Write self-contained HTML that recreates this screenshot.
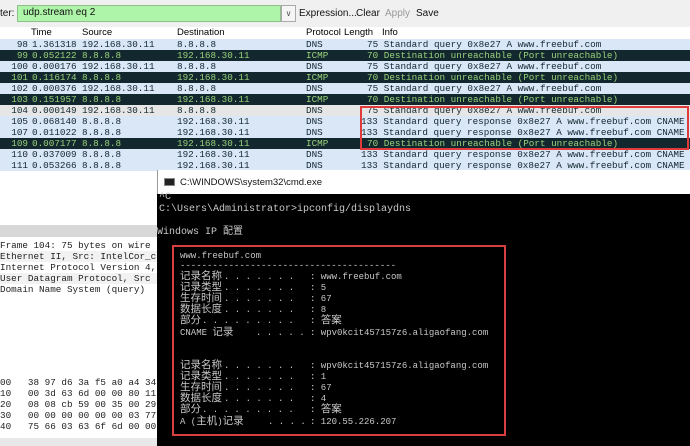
<!DOCTYPE html>
<html><head><meta charset="utf-8"><style>
*{margin:0;padding:0;box-sizing:border-box}
body{width:690px;height:446px;overflow:hidden;background:#fff;position:relative;font-family:"Liberation Sans",sans-serif}
.abs{position:absolute;white-space:pre}
.mono{font-family:"Liberation Mono","DejaVu Sans Mono",monospace;font-size:9.3px}
.row{position:absolute;left:0;width:690px;height:11px;font-family:"Liberation Mono",monospace;font-size:9.3px;line-height:11px;color:#12272e}
.row span{position:absolute;white-space:pre}
.row .n{right:662px;text-align:right}
.d{background:#dae7f7}
.i{background:#12272e;color:#9ad27a}
.s{background:#e6e6e6}
.cmd{font-family:"Liberation Mono","Noto Sans CJK SC",monospace;font-size:10px;color:#c8c8c8;position:absolute;white-space:pre;line-height:12px}
.ln{position:absolute;left:180px;height:11px;font-family:"Liberation Mono","Noto Sans CJK SC",monospace;font-size:9px;color:#c8c8c8;white-space:pre;line-height:11px}
.ln b{font-weight:normal;position:absolute;white-space:pre}
.ln i{font-style:normal;font-size:10.5px}
</style></head><body>
<div class="abs" style="left:0;top:0;width:690px;height:27px;background:#f0f0f0"></div>
<div class="abs" style="left:0;top:8px;font-size:10px;color:#111">ter:</div>
<div class="abs" style="left:17px;top:5px;width:264px;height:17px;background:#aff5a9;border:1px solid #8fbf8a"></div>
<div class="abs" style="left:23px;top:7px;font-size:10px;color:#111">udp.stream eq 2</div>
<div class="abs" style="left:281px;top:5px;width:15px;height:17px;background:#f5f5f5;border:1px solid #aaa;font-size:8px;text-align:center;line-height:15px;color:#555">∨</div>
<div class="abs" style="left:299px;top:8px;font-size:10px;color:#111">Expression...</div>
<div class="abs" style="left:356px;top:8px;font-size:10px;color:#111">Clear</div>
<div class="abs" style="left:385px;top:8px;font-size:10px;color:#999">Apply</div>
<div class="abs" style="left:416px;top:8px;font-size:10px;color:#111">Save</div>
<div class="abs" style="left:31px;top:27px;font-size:9.5px">Time</div>
<div class="abs" style="left:82px;top:27px;font-size:9.5px">Source</div>
<div class="abs" style="left:177px;top:27px;font-size:9.5px">Destination</div>
<div class="abs" style="left:306px;top:27px;font-size:9.5px">Protocol</div>
<div class="abs" style="left:344px;top:27px;font-size:9.5px">Length</div>
<div class="abs" style="left:382px;top:27px;font-size:9.5px">Info</div>

<div class="row d" style="top:39px"><span class="n">98</span><span style="left:32px">1.361318</span><span style="left:82px">192.168.30.11</span><span style="left:177px">8.8.8.8</span><span style="left:306px">DNS</span><span style="left:367px">75 Standard query 0x8e27 A www.freebuf.com</span></div>
<div class="row i" style="top:50px"><span class="n">99</span><span style="left:32px">0.052122</span><span style="left:82px">8.8.8.8</span><span style="left:177px">192.168.30.11</span><span style="left:306px">ICMP</span><span style="left:367px">70 Destination unreachable (Port unreachable)</span></div>
<div class="row d" style="top:61px"><span class="n">100</span><span style="left:32px">0.000176</span><span style="left:82px">192.168.30.11</span><span style="left:177px">8.8.8.8</span><span style="left:306px">DNS</span><span style="left:367px">75 Standard query 0x8e27 A www.freebuf.com</span></div>
<div class="row i" style="top:72px"><span class="n">101</span><span style="left:32px">0.116174</span><span style="left:82px">8.8.8.8</span><span style="left:177px">192.168.30.11</span><span style="left:306px">ICMP</span><span style="left:367px">70 Destination unreachable (Port unreachable)</span></div>
<div class="row d" style="top:83px"><span class="n">102</span><span style="left:32px">0.000376</span><span style="left:82px">192.168.30.11</span><span style="left:177px">8.8.8.8</span><span style="left:306px">DNS</span><span style="left:367px">75 Standard query 0x8e27 A www.freebuf.com</span></div>
<div class="row i" style="top:94px"><span class="n">103</span><span style="left:32px">0.151957</span><span style="left:82px">8.8.8.8</span><span style="left:177px">192.168.30.11</span><span style="left:306px">ICMP</span><span style="left:367px">70 Destination unreachable (Port unreachable)</span></div>
<div class="row s" style="top:105px"><span class="n">104</span><span style="left:32px">0.000149</span><span style="left:82px">192.168.30.11</span><span style="left:177px">8.8.8.8</span><span style="left:306px">DNS</span><span style="left:367px">75 Standard query 0x8e27 A www.freebuf.com</span></div>
<div class="row d" style="top:116px"><span class="n">105</span><span style="left:32px">0.068140</span><span style="left:82px">8.8.8.8</span><span style="left:177px">192.168.30.11</span><span style="left:306px">DNS</span><span style="left:361px">133 Standard query response 0x8e27 A www.freebuf.com CNAME w</span></div>
<div class="row d" style="top:127px"><span class="n">107</span><span style="left:32px">0.011022</span><span style="left:82px">8.8.8.8</span><span style="left:177px">192.168.30.11</span><span style="left:306px">DNS</span><span style="left:361px">133 Standard query response 0x8e27 A www.freebuf.com CNAME w</span></div>
<div class="row i" style="top:138px"><span class="n">109</span><span style="left:32px">0.007177</span><span style="left:82px">8.8.8.8</span><span style="left:177px">192.168.30.11</span><span style="left:306px">ICMP</span><span style="left:367px">70 Destination unreachable (Port unreachable)</span></div>
<div class="row d" style="top:149px"><span class="n">110</span><span style="left:32px">0.037009</span><span style="left:82px">8.8.8.8</span><span style="left:177px">192.168.30.11</span><span style="left:306px">DNS</span><span style="left:361px">133 Standard query response 0x8e27 A www.freebuf.com CNAME w</span></div>
<div class="row d" style="top:160px"><span class="n">111</span><span style="left:32px">0.053266</span><span style="left:82px">8.8.8.8</span><span style="left:177px">192.168.30.11</span><span style="left:306px">DNS</span><span style="left:361px">133 Standard query response 0x8e27 A www.freebuf.com CNAME w</span></div>
<div class="abs" style="left:360px;top:106px;width:329px;height:44px;border:2px solid #e03a3a"></div>

<div class="abs" style="left:0;top:225px;width:157px;height:12px;background:#d8d8d8"></div>
<div class="abs" style="left:0;top:251px;width:157px;height:11px;background:rgba(0,0,0,0.05)"></div>
<div class="abs" style="left:0;top:273px;width:157px;height:11px;background:rgba(0,0,0,0.05)"></div>
<div class="abs mono" style="left:0;top:240px;line-height:11px;color:#222">Frame 104: 75 bytes on wire
Ethernet II, Src: IntelCor_c
Internet Protocol Version 4,
User Datagram Protocol, Src
Domain Name System (query)</div>
<div class="abs mono" style="left:0;top:377px;line-height:11px;color:#222">00   38 97 d6 3a f5 a0 a4 34
10   00 3d 63 6d 00 00 80 11
20   08 08 cb 59 00 35 00 29
30   00 00 00 00 00 00 03 77
40   75 66 03 63 6f 6d 00 00</div>
<div class="abs" style="left:0;top:438px;width:157px;height:8px;background:#e8e8e8"></div>

<div class="abs" style="left:157px;top:170px;width:533px;height:24px;background:#fff;border-left:1px solid #999"></div>
<div class="abs" style="left:164px;top:178px;width:11px;height:8px;background:#222;border:1px solid #888"></div>
<div class="abs" style="left:180px;top:177px;font-size:9.5px;color:#111">C:\WINDOWS\system32\cmd.exe</div>
<div class="abs" style="left:157px;top:194px;width:533px;height:252px;background:#000"></div>
<div class="cmd" style="left:159px;top:192px">^C
C:\Users\Administrator&gt;ipconfig/displaydns</div>
<div class="cmd" style="left:157px;top:227px">Windows IP 配置</div>
<div class="abs" style="left:172px;top:245px;width:334px;height:191px;border:2px solid #d84040"></div>
<div class="ln" style="top:251px">www.freebuf.com</div>
<div class="ln" style="top:261px">----------------------------------------</div>
<div class="ln" style="top:272px"><b style="left:0"><i>记录名称</i></b><b style="left:44px">. . . . . . .</b><b style="left:130px">: www.freebuf.com</b></div>
<div class="ln" style="top:283px"><b style="left:0"><i>记录类型</i></b><b style="left:44px">. . . . . . .</b><b style="left:130px">: 5</b></div>
<div class="ln" style="top:294px"><b style="left:0"><i>生存时间</i></b><b style="left:44px">. . . . . . .</b><b style="left:130px">: 67</b></div>
<div class="ln" style="top:305px"><b style="left:0"><i>数据长度</i></b><b style="left:44px">. . . . . . .</b><b style="left:130px">: 8</b></div>
<div class="ln" style="top:316px"><b style="left:0"><i>部分</i></b><b style="left:22px">. . . . . . . . .</b><b style="left:130px">: <i>答案</i></b></div>
<div class="ln" style="top:328px"><b style="left:0">CNAME <i>记录</i></b><b style="left:76px">. . . . .</b><b style="left:130px">: wpv0kcit457157z6.aligaofang.com</b></div>
<div class="ln" style="top:361px"><b style="left:0"><i>记录名称</i></b><b style="left:44px">. . . . . . .</b><b style="left:130px">: wpv0kcit457157z6.aligaofang.com</b></div>
<div class="ln" style="top:372px"><b style="left:0"><i>记录类型</i></b><b style="left:44px">. . . . . . .</b><b style="left:130px">: 1</b></div>
<div class="ln" style="top:383px"><b style="left:0"><i>生存时间</i></b><b style="left:44px">. . . . . . .</b><b style="left:130px">: 67</b></div>
<div class="ln" style="top:394px"><b style="left:0"><i>数据长度</i></b><b style="left:44px">. . . . . . .</b><b style="left:130px">: 4</b></div>
<div class="ln" style="top:405px"><b style="left:0"><i>部分</i></b><b style="left:22px">. . . . . . . . .</b><b style="left:130px">: <i>答案</i></b></div>
<div class="ln" style="top:417px"><b style="left:0">A (<i>主机</i>)<i>记录</i></b><b style="left:88px">. . . .</b><b style="left:130px">: 120.55.226.207</b></div>
</body></html>
